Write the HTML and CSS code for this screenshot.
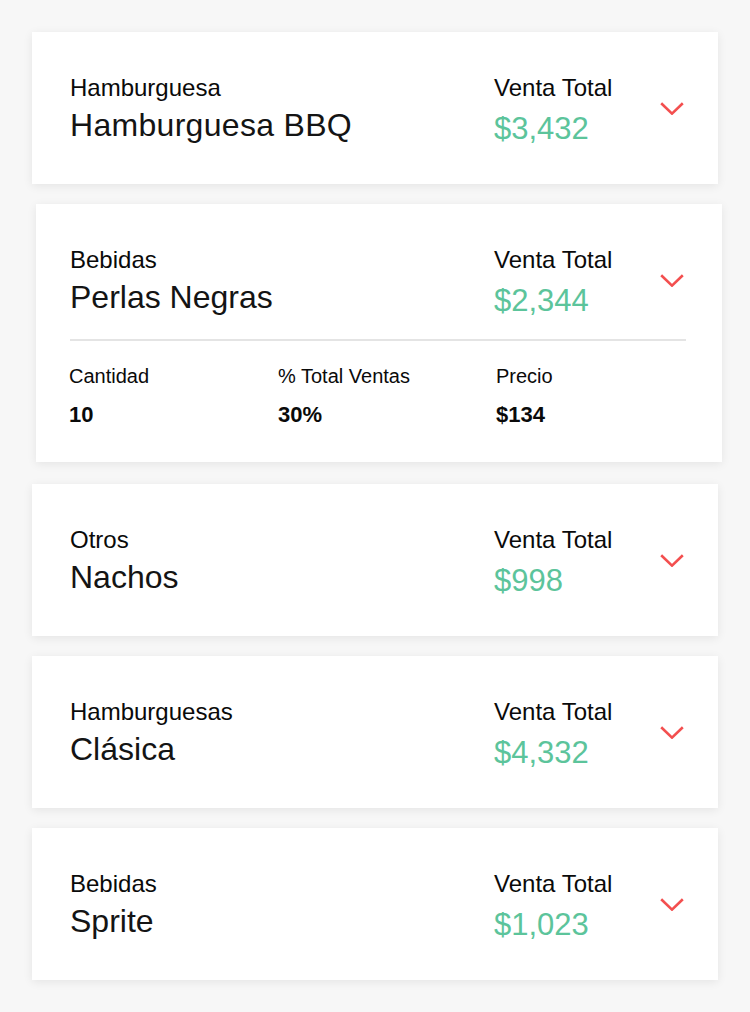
FILE: index.html
```html
<!DOCTYPE html>
<html lang="es">
<head>
<meta charset="utf-8">
<title>Ventas por producto</title>
<link rel="stylesheet" href="styles.css">
</head>
<body>
<main class="list">
  <section class="card">
    <div class="row">
      <div class="product">
        <div class="category">Hamburguesa</div>
        <div class="name name-wide">Hamburguesa BBQ</div>
      </div>
      <div class="total">
        <div class="total-label">Venta Total</div>
        <div class="total-value">$3,432</div>
      </div>
      <svg class="chevron" viewBox="0 0 24 13" width="24" height="13"><polyline points="1.2,1.2 12,11.6 22.8,1.2"/></svg>
    </div>
  </section>

  <section class="card card-open">
    <div class="row">
      <div class="product">
        <div class="category">Bebidas</div>
        <div class="name">Perlas Negras</div>
      </div>
      <div class="total">
        <div class="total-label">Venta Total</div>
        <div class="total-value">$2,344</div>
      </div>
      <svg class="chevron chevron-open" viewBox="0 0 24 13" width="24" height="13"><polyline points="1.2,1.2 12,11.6 22.8,1.2"/></svg>
    </div>
    <div class="details">
      <div class="detail">
        <div class="detail-label">Cantidad</div>
        <div class="detail-value">10</div>
      </div>
      <div class="detail">
        <div class="detail-label">% Total Ventas</div>
        <div class="detail-value">30%</div>
      </div>
      <div class="detail">
        <div class="detail-label">Precio</div>
        <div class="detail-value">$134</div>
      </div>
    </div>
  </section>

  <section class="card">
    <div class="row">
      <div class="product">
        <div class="category">Otros</div>
        <div class="name">Nachos</div>
      </div>
      <div class="total">
        <div class="total-label">Venta Total</div>
        <div class="total-value">$998</div>
      </div>
      <svg class="chevron" viewBox="0 0 24 13" width="24" height="13"><polyline points="1.2,1.2 12,11.6 22.8,1.2"/></svg>
    </div>
  </section>

  <section class="card">
    <div class="row">
      <div class="product">
        <div class="category">Hamburguesas</div>
        <div class="name">Clásica</div>
      </div>
      <div class="total">
        <div class="total-label">Venta Total</div>
        <div class="total-value">$4,332</div>
      </div>
      <svg class="chevron" viewBox="0 0 24 13" width="24" height="13"><polyline points="1.2,1.2 12,11.6 22.8,1.2"/></svg>
    </div>
  </section>

  <section class="card">
    <div class="row">
      <div class="product">
        <div class="category">Bebidas</div>
        <div class="name">Sprite</div>
      </div>
      <div class="total">
        <div class="total-label">Venta Total</div>
        <div class="total-value">$1,023</div>
      </div>
      <svg class="chevron" viewBox="0 0 24 13" width="24" height="13"><polyline points="1.2,1.2 12,11.6 22.8,1.2"/></svg>
    </div>
  </section>
</main>
</body>
</html>
```

FILE: styles.css
```css
html, body {
  margin: 0;
  padding: 0;
  background: #f7f7f7;
}

body {
  font-family: "Liberation Sans", Arial, Helvetica, sans-serif;
  color: #0a0a0a;
}

.list {
  display: flex;
  flex-direction: column;
  gap: 20px;
  padding: 32px 32px 32px 32px;
}

.card {
  background: #ffffff;
  box-shadow: 0 2px 9px rgba(0, 0, 0, 0.08);
  padding: 42px 34px 36px 38px;
  box-sizing: border-box;
}

.card-open {
  margin-left: 4px;
  margin-right: -4px;
  margin-bottom: 2px;
  padding: 42px 36px 34px 34px;
}

.row {
  display: flex;
  align-items: flex-start;
}

.product {
  flex: 1;
  min-width: 0;
}

.category {
  font-size: 24px;
  line-height: 28px;
}

.name {
  font-size: 32px;
  line-height: 38px;
  margin-top: 4px;
  color: #141414;
}

.name-wide {
  letter-spacing: 0.3px;
}

.total {
  width: 166px;
  flex-shrink: 0;
}

.total-label {
  font-size: 24px;
  line-height: 28px;
}

.total-value {
  font-size: 31px;
  line-height: 38px;
  margin-top: 8px;
  color: #5cc49b;
}

.chevron {
  flex-shrink: 0;
  margin-top: 28px;
  fill: none;
  stroke: #f34f4f;
  stroke-width: 2.6;
  stroke-linecap: butt;
  stroke-linejoin: miter;
}

.chevron-open {
  margin-right: 2px;
}

.details {
  margin-top: 19px;
  border-top: 2px solid #e4e4e4;
  padding-top: 23px;
  display: grid;
  grid-template-columns: 209px 218px 1fr;
}

.detail {
  margin-left: -1px;
}

.detail-label {
  font-size: 20px;
  line-height: 24px;
}

.detail-value {
  font-size: 22px;
  line-height: 26px;
  font-weight: bold;
  margin-top: 14px;
}
```
